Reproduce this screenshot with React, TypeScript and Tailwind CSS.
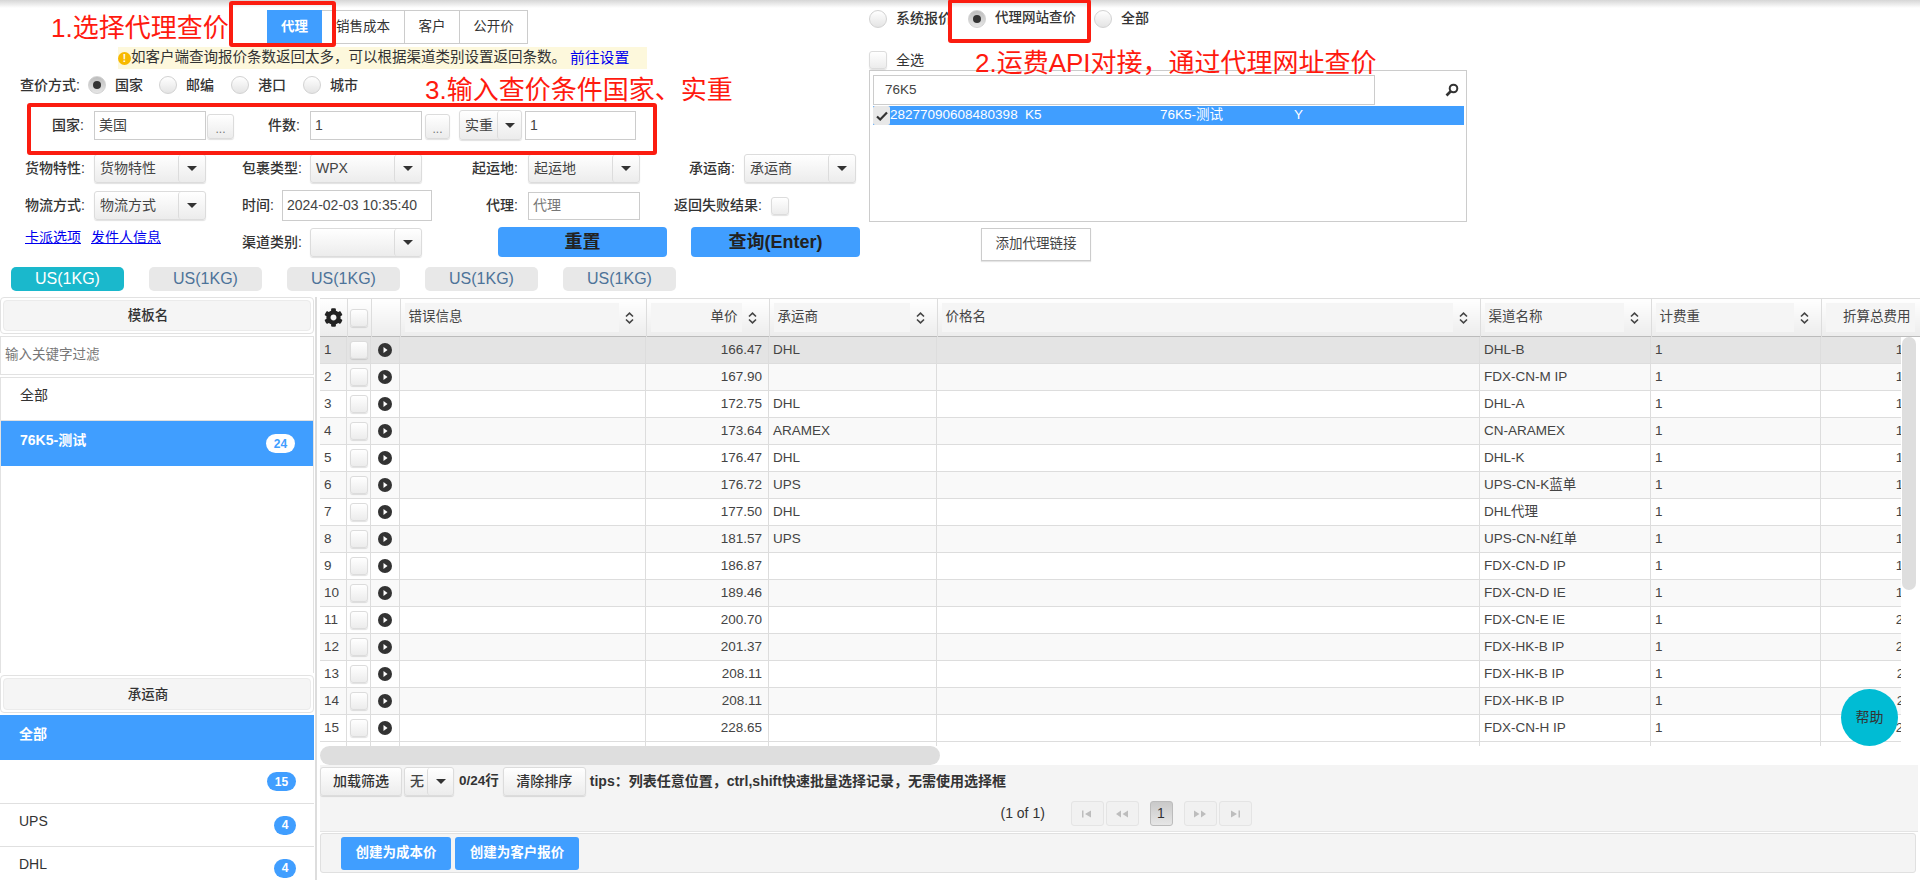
import { FaCog } from "react-icons/fa";

const ctl = "bg-gradient-to-b from-white to-[#ececec] border border-[#dcdcdc] rounded-[3px] shadow-[0_1px_1px_rgba(0,0,0,0.12)]";
const cell = "p-0 border-r border-b border-[#ddd] text-[#444] ";

function Radio({ on }: { on?: boolean }) {
  return (
    <span
      className={
        "w-[18px] h-[18px] rounded-full border border-[#d2d2d2] flex items-center justify-center shrink-0 " +
        (on ? "bg-gradient-to-b from-[#bdbdbd] to-[#e6e6e6]" : "bg-gradient-to-b from-white to-[#e4e4e4]")
      }
    >
      {on && <span className="w-[8px] h-[8px] rounded-full bg-[#333]" />}
    </span>
  );
}

function Box({ className = "" }: { className?: string }) {
  return <span className={"block w-[18px] h-[18px] shrink-0 " + ctl + " " + className} />;
}

function Caret() {
  return <span className="w-0 h-0 border-x-[5px] border-x-transparent border-t-[5px] border-t-[#333]" />;
}

function Select({ text, w, h = "h-[29px]", arrow = "w-[27px]" }: { text: string; w: string; h?: string; arrow?: string }) {
  return (
    <div className={"flex items-stretch overflow-hidden " + w + " " + h + " " + ctl}>
      <span className="flex-1 pl-[5px] flex items-center text-[14px] text-[#444] whitespace-nowrap overflow-hidden">{text}</span>
      <span className={"flex items-center justify-center border-l border-[#dcdcdc] rounded-[3px] " + arrow}>
        <Caret />
      </span>
    </div>
  );
}

function Label({ text, className }: { text: string; className: string }) {
  return <span className={"text-right text-[14px] font-medium text-[#333] whitespace-nowrap shrink-0 " + className}>{text}</span>;
}

function Input({ value, w, h = "h-[29px]", gray }: { value: string; w: string; h?: string; gray?: boolean }) {
  return (
    <div className={"border border-[#ccc] bg-white pl-[4px] flex items-center text-[14px] " + w + " " + h + " " + (gray ? "text-[#777]" : "text-[#444]")}>
      {value}
    </div>
  );
}

function Dots({ w }: { w: string }) {
  return <div className={"h-[25px] mt-[3px] text-[12px] text-[#777] flex items-end justify-center pb-[3px] leading-none " + w + " " + ctl}>...</div>;
}

function Sort() {
  return (
    <svg width="9" height="12" viewBox="0 0 9 12" fill="none" stroke="#444" strokeWidth="1.6">
      <path d="M1 4.5 L4.5 1.2 L8 4.5" />
      <path d="M1 7.5 L4.5 10.8 L8 7.5" />
    </svg>
  );
}

function Play() {
  return (
    <svg width="14" height="14" viewBox="0 0 14 14" className="block">
      <circle cx="7" cy="7" r="7" fill="#333" />
      <path d="M5.5 4 L9.5 7 L5.5 10 Z" fill="#fff" />
    </svg>
  );
}

function Badge({ n, w, white }: { n: number; w: string; white?: boolean }) {
  return (
    <span className={"h-[19px] rounded-full text-[12px] font-bold flex items-center justify-center " + w + " " + (white ? "bg-white text-[#409eff]" : "bg-[#409eff] text-white")}>
      {n}
    </span>
  );
}

function PanelHead({ text, h }: { text: string; h: string }) {
  return (
    <div className={"border border-[#e2e2e2] rounded-[4px] p-[2px] bg-white " + h}>
      <div className="h-full bg-[#f5f5f5] border border-[#ebebeb] rounded-[4px] flex items-center justify-center pr-[18px] pt-[2px] text-[13.5px] font-medium text-[#333]">
        {text}
      </div>
    </div>
  );
}

function Item({ text, badge, active, h }: { text?: string; badge?: React.ReactNode; active?: boolean; h: string }) {
  return (
    <div className={"flex items-center justify-between pl-[19px] pr-[18px] " + h + " " + (active ? "bg-[#409eff] text-white font-bold" : "text-[#333] border-b border-[#e0e0e0]")}>
      <span className="text-[14px] pb-[7px]">{text}</span>
      {badge}
    </div>
  );
}

const colWidths = [27, 24, 29, 246, 123, 168, 543, 171, 170, 124];

const rows: [string, string, string][] = [
  ["166.47", "DHL", "DHL-B"],
  ["167.90", "", "FDX-CN-M IP"],
  ["172.75", "DHL", "DHL-A"],
  ["173.64", "ARAMEX", "CN-ARAMEX"],
  ["176.47", "DHL", "DHL-K"],
  ["176.72", "UPS", "UPS-CN-K蓝单"],
  ["177.50", "DHL", "DHL代理"],
  ["181.57", "UPS", "UPS-CN-N红单"],
  ["186.87", "", "FDX-CN-D IP"],
  ["189.46", "", "FDX-CN-D IE"],
  ["200.70", "", "FDX-CN-E IE"],
  ["201.37", "", "FDX-HK-B IP"],
  ["208.11", "", "FDX-HK-B IP"],
  ["208.11", "", "FDX-HK-B IP"],
  ["228.65", "", "FDX-CN-H IP"],
];

function Cols() {
  return (
    <colgroup>
      {colWidths.map((w, i) => (
        <col key={i} style={{ width: w }} />
      ))}
    </colgroup>
  );
}

function Head({ text, right, noSort }: { text: string; right?: boolean; noSort?: boolean }) {
  return (
    <th className="p-0 font-normal border-r border-[#ddd] bg-gradient-to-b from-white to-[#ececec]">
      <div className="flex items-center h-[37px] pl-[4px]">
        <div className={"h-[29px] bg-[#f5f5f5] flex items-center px-[4px] text-[#444] whitespace-nowrap " + (noSort ? "w-[89px] justify-end" : "flex-1 ") + (right ? " justify-end" : "")}>
          {text}
        </div>
        {!noSort && (
          <div className="w-[27px] flex pl-[6px]">
            <Sort />
          </div>
        )}
      </div>
    </th>
  );
}

function PagerBtn({ d }: { d: string }) {
  return (
    <div className="w-[33px] h-[25px] bg-[#f1f1f1] border border-[#e4e4e4] rounded-[3px] flex items-center justify-center">
      <svg width="14" height="8" viewBox="0 0 14 8" fill="#bdbdbd">
        <path d={d} />
      </svg>
    </div>
  );
}

export default function App() {
  return (
    <div className="relative w-full h-screen overflow-hidden bg-white text-[#333] [font-family:'Liberation_Sans','Noto_Sans_CJK_SC',sans-serif]">
      <div className="h-[8px] bg-gradient-to-b from-[#d6d6d6] to-white" />

      <div className="flex h-[287px]">
        {/* query form */}
        <div className="w-[869px] shrink-0">
          <div className="ml-[267px] mt-[2px] flex h-[34px] text-[13.5px]">
            <div className="w-[55px] bg-[#409eff] text-white font-bold flex items-center justify-center">代理</div>
            <div className="w-[83px] border-y border-r border-[#ccc] flex items-center justify-center">销售成本</div>
            <div className="w-[55px] border-y border-r border-[#ccc] flex items-center justify-center">客户</div>
            <div className="w-[68px] border-y border-r border-[#ccc] flex items-center justify-center">公开价</div>
          </div>

          <div className="ml-[118px] mt-[3px] w-[529px] h-[22px] bg-[#fdf8dc] flex items-center text-[14.5px] whitespace-nowrap">
            <span className="w-[13px] h-[13px] rounded-full bg-[#f7b900] text-white text-[10px] font-bold flex items-center justify-center shrink-0">!</span>
            <span>如客户端查询报价条数返回太多，可以根据渠道类别设置返回条数。</span>
            <a className="text-[#0000ee] text-[14.8px] ml-[4px]">前往设置</a>
          </div>

          <div className="mt-[7px] h-[18px] flex items-center text-[14px]">
            <Label text="查价方式:" className="w-[80px] mr-[8px]" />
            <Radio on />
            <span className="ml-[9px] w-[44px] font-medium">国家</span>
            <Radio />
            <span className="ml-[9px] w-[45px] font-medium">邮编</span>
            <Radio />
            <span className="ml-[9px] w-[45px] font-medium">港口</span>
            <Radio />
            <span className="ml-[9px] font-medium">城市</span>
          </div>

          <div className="mt-[16px] h-[30px] flex items-center">
            <Label text="国家:" className="w-[84px] mr-[10px]" />
            <Input value="美国" w="w-[112px]" />
            <Dots w="w-[27px] ml-[1px]" />
            <Label text="件数:" className="w-[66px] mr-[10px]" />
            <Input value="1" w="w-[112px]" />
            <Dots w="w-[25px] ml-[3px]" />
            <div className="ml-[9px]">
              <Select text="实重" w="w-[63px]" h="h-[30px]" arrow="w-[24px]" />
            </div>
            <div className="ml-[3px]">
              <Input value="1" w="w-[111px]" />
            </div>
          </div>

          <div className="mt-[14px] grid grid-cols-[216px_216px_216px_216px] h-[29px]">
            <div className="flex items-center">
              <Label text="货物特性:" className="w-[85px] mr-[9px]" />
              <Select text="货物特性" w="w-[112px]" />
            </div>
            <div className="flex items-center">
              <Label text="包裹类型:" className="w-[86px] mr-[8px]" />
              <Select text="WPX" w="w-[112px]" />
            </div>
            <div className="flex items-center">
              <Label text="起运地:" className="w-[86px] mr-[10px]" />
              <Select text="起运地" w="w-[112px]" />
            </div>
            <div className="flex items-center">
              <Label text="承运商:" className="w-[87px] mr-[9px]" />
              <Select text="承运商" w="w-[112px]" />
            </div>
          </div>

          <div className="mt-[7px] grid grid-cols-[216px_216px_216px_216px] h-[31px]">
            <div className="flex items-center">
              <Label text="物流方式:" className="w-[85px] mr-[9px]" />
              <Select text="物流方式" w="w-[112px]" />
            </div>
            <div className="flex items-center">
              <Label text="时间:" className="w-[58px] mr-[8px]" />
              <Input value="2024-02-03 10:35:40" w="w-[151px]" h="h-[31px]" />
            </div>
            <div className="flex items-center">
              <Label text="代理:" className="w-[86px] mr-[10px]" />
              <Input value="代理" w="w-[112px]" h="h-[28px]" gray />
            </div>
            <div className="flex items-center">
              <Label text="返回失败结果:" className="w-[114px] mr-[9px]" />
              <Box />
            </div>
          </div>

          <div className="mt-[6px] grid grid-cols-[216px_216px_216px_216px] h-[30px]">
            <div className="pl-[25px] flex gap-[10px] text-[14px] text-[#0000ee] underline">
              <a>卡派选项</a>
              <a>发件人信息</a>
            </div>
            <div className="flex items-center">
              <Label text="渠道类别:" className="w-[86px] mr-[8px]" />
              <Select text="" w="w-[112px]" />
            </div>
            <div className="pl-[66px]">
              <div className="w-[169px] h-[30px] bg-[#409eff] rounded-[4px] flex items-center justify-center text-[18px] font-bold text-[#222]">重置</div>
            </div>
            <div className="pl-[43px]">
              <div className="w-[169px] h-[30px] bg-[#409eff] rounded-[4px] flex items-center justify-center text-[18px] font-bold text-[#222]">查询(Enter)</div>
            </div>
          </div>

          <div className="mt-[10px] ml-[11px] flex gap-[25px] text-[16px]">
            <div className="w-[113px] h-[24px] rounded-[5px] bg-[#1ab8cc] text-white flex items-center justify-center">US(1KG)</div>
            {[0, 1, 2, 3].map((i) => (
              <div key={i} className="w-[113px] h-[24px] rounded-[5px] bg-[#e8e8e8] text-[#4d7399] flex items-center justify-center">US(1KG)</div>
            ))}
          </div>
        </div>

        {/* agent list */}
        <div className="w-[598px] shrink-0 text-[14px]">
          <div className="mt-[1px] h-[19px] flex items-center font-medium">
            <div className="w-[99px] flex items-center gap-[9px]">
              <Radio />
              <span>系统报价</span>
            </div>
            <div className="w-[126px] flex items-center gap-[9px]">
              <Radio on />
              <span className="text-[13.5px] whitespace-nowrap">代理网站查价</span>
            </div>
            <div className="flex items-center gap-[9px]">
              <Radio />
              <span>全部</span>
            </div>
          </div>
          <div className="mt-[23px] h-[18px] flex items-center gap-[9px]">
            <Box />
            <span>全选</span>
          </div>
          <div className="mt-[1px] h-[152px] border border-[#ccc] pt-[4px] pl-[3px]">
            <div className="flex items-center h-[30px]">
              <div className="w-[502px] h-[30px] border border-[#ccc] pl-[11px] flex items-center text-[#444] text-[13.5px]">76K5</div>
              <svg width="14" height="14" viewBox="0 0 14 14" fill="none" stroke="#333" strokeWidth="2" className="ml-[70px]">
                <circle cx="8.5" cy="5.5" r="3.8" />
                <path d="M5.5 8.5 L1.5 12.5" strokeWidth="2.6" />
              </svg>
            </div>
            <div className="mt-[1px] w-[591px] h-[19px] bg-[#409eff] text-white text-[13.5px] flex items-center whitespace-nowrap">
              <span className="w-[17px] h-[19px] bg-[#e8e8e8] rounded-[2px] flex items-center justify-center shrink-0">
                <svg width="12" height="10" viewBox="0 0 12 10" fill="none" stroke="#333" strokeWidth="2.2">
                  <path d="M1 5.5 L4.2 8.5 L11 1.5" />
                </svg>
              </span>
              <span className="w-[135px]">28277090608480398</span>
              <span className="w-[135px]">K5</span>
              <span className="w-[134px]">76K5-测试</span>
              <span>Y</span>
            </div>
          </div>
          <div className="mt-[6px] ml-[112px] w-[110px] h-[33px] border border-[#ccc] shadow-[0_1px_1px_rgba(0,0,0,0.1)] flex items-center justify-center text-[13.5px] text-[#444]">
            添加代理链接
          </div>
        </div>
      </div>

      {/* result area */}
      <div className="flex h-[585px]">
        <div className="w-[314px] shrink-0 pt-[2px] flex flex-col gap-[2px]">
          <PanelHead text="模板名" h="h-[37px]" />
          <div className="h-[39px] border border-[#e2e2e2] pl-[4px] flex items-center text-[13.5px] text-[#777]">输入关键字过滤</div>
          <div className="h-[296px] border-x border-t border-[#e2e2e2]">
            <Item text="全部" h="h-[43px]" />
            <Item text="76K5-测试" active h="h-[45px]" badge={<Badge n={24} w="w-[29px]" white />} />
          </div>
          <PanelHead text="承运商" h="h-[38px]" />
          <div className="flex-1 overflow-hidden">
            <Item text="全部" active h="h-[45px]" />
            <Item h="h-[44px]" badge={<Badge n={15} w="w-[29px]" />} />
            <Item text="UPS" h="h-[43px]" badge={<Badge n={4} w="w-[22px]" />} />
            <Item text="DHL" h="h-[43px]" badge={<Badge n={4} w="w-[22px]" />} />
          </div>
        </div>
        <div className="w-[2px] bg-[#ddd] ml-[1px] mt-[2px] shrink-0" />
        <div className="ml-[3px] flex-1 min-w-0 pt-[3px] text-[13.5px]">
          <div className="w-[1600px] overflow-hidden border-t border-[#ddd]">
            <table className="table-fixed w-[1625px] border-b border-[#bbb]">
              <Cols />
              <thead>
                <tr>
                  <th className="p-0 border-r border-[#ddd] bg-gradient-to-b from-white to-[#ececec]">
                    <div className="flex justify-center">
                      <FaCog size={19} color="#222" />
                    </div>
                  </th>
                  <th className="p-0 border-r border-[#ddd] bg-gradient-to-b from-white to-[#ececec]">
                    <div className="flex justify-center">
                      <Box />
                    </div>
                  </th>
                  <th className="p-0 border-r border-[#ddd] bg-gradient-to-b from-white to-[#ececec]" />
                  <Head text="错误信息" />
                  <Head text="单价" right />
                  <Head text="承运商" />
                  <Head text="价格名" />
                  <Head text="渠道名称" />
                  <Head text="计费重" />
                  <Head text="折算总费用" noSort />
                </tr>
              </thead>
            </table>
          </div>

          <div className="flex">
            <div className="w-[1581px] h-[409px] overflow-hidden shrink-0">
              <table className="table-fixed w-[1625px] border-separate border-spacing-0">
                <Cols />
                <tbody>
                  {rows.map((r, i) => (
                    <tr key={i} className={"h-[27px] " + (i === 0 ? "bg-[#e4e4e4]" : i % 2 ? "bg-[#f9f9f9]" : "bg-white")}>
                      <td className={cell + "pl-[4px]"}>{i + 1}</td>
                      <td className={cell}>
                        <div className="flex justify-center">
                          <Box />
                        </div>
                      </td>
                      <td className={cell}>
                        <div className="flex justify-center">
                          <Play />
                        </div>
                      </td>
                      <td className={cell} />
                      <td className={cell + "pr-[6px] text-right"}>{r[0]}</td>
                      <td className={cell + "pl-[4px]"}>{r[1]}</td>
                      <td className={cell} />
                      <td className={cell + "pl-[4px]"}>{r[2]}</td>
                      <td className={cell + "pl-[4px]"}>1</td>
                      <td className={cell + "pr-[7px] text-right"}>{r[0]}</td>
                    </tr>
                  ))}
                  <tr className="h-[27px]">
                    {colWidths.map((_, i) => (
                      <td key={i} className="p-0 border-r border-[#ddd]" />
                    ))}
                  </tr>
                </tbody>
              </table>
            </div>
            <div className="ml-[1px] w-[14px] h-[253px] rounded-full bg-[#dedede]" />
          </div>

          <div className="h-[19px]">
            <div className="w-[620px] h-[19px] rounded-[10px] bg-[#dedede]" />
          </div>

          <div className="w-[1598px] h-[67px] bg-[#f4f4f4] border-b border-[#e4e4e4] pt-[2px]">
            <div className="flex items-center h-[29px] font-medium text-[14px]">
              <div className={"w-[82px] h-[29px] flex items-center justify-center " + ctl}>加载筛选</div>
              <div className="ml-[2px]">
                <Select text="无" w="w-[50px]" arrow="w-[26px]" />
              </div>
              <span className="ml-[5px] font-bold text-[13.5px]">0/24行</span>
              <div className={"ml-[4px] w-[83px] h-[29px] flex items-center justify-center " + ctl}>清除排序</div>
              <span className="ml-[4px] font-bold text-[14px]">tips：列表任意位置，ctrl,shift快速批量选择记录，无需使用选择框</span>
            </div>
            <div className="mt-[5px] pl-[14px] flex items-center justify-center h-[25px]">
              <span className="w-[70px] font-medium text-[14px]">(1 of 1)</span>
              <PagerBtn d="M2 0.5 V7.5 H3.5 V0.5 Z M11 0.5 L5 4 L11 7.5 Z" />
              <div className="ml-[2px]">
                <PagerBtn d="M6 0.5 L1 4 L6 7.5 Z M13 0.5 L7.5 4 L13 7.5 Z" />
              </div>
              <div className="mx-[11px] w-[23px] h-[25px] rounded-[3px] bg-gradient-to-b from-[#c9c9c9] to-[#e6e6e6] border border-[#bcbcbc] flex items-center justify-center font-medium text-[14px]">1</div>
              <PagerBtn d="M1 0.5 L6.5 4 L1 7.5 Z M8 0.5 L13 4 L8 7.5 Z" />
              <div className="ml-[2px]">
                <PagerBtn d="M3 0.5 L9 4 L3 7.5 Z M10.5 0.5 V7.5 H12 V0.5 Z" />
              </div>
            </div>
          </div>

          <div className="mt-[1px] w-[1596px] h-[40px] bg-[#f4f4f4] border border-[#e0e0e0] rounded-[3px] pl-[20px] pt-[3px] flex gap-[4px] text-white font-bold text-[13.5px]">
            <div className="w-[110px] h-[33px] bg-[#409eff] rounded-[3px] flex items-center justify-center">创建为成本价</div>
            <div className="w-[124px] h-[33px] bg-[#409eff] rounded-[3px] flex items-center justify-center">创建为客户报价</div>
          </div>
        </div>
      </div>

      {/* help bubble */}
      <div className="absolute left-[1841px] top-[689px] w-[57px] h-[57px] rounded-full bg-[#00bcd4] flex items-center justify-center text-[14px] text-[#333]">帮助</div>

      {/* annotations on the screenshot */}
      <span className="absolute left-[51px] top-[9px] text-[26px] text-[#ff1a0f] whitespace-nowrap">1.选择代理查价</span>
      <span className="absolute left-[975px] top-[44px] text-[26px] text-[#ff1a0f] whitespace-nowrap">2.运费API对接，通过代理网址查价</span>
      <span className="absolute left-[425px] top-[71px] text-[26px] text-[#ff1a0f] whitespace-nowrap">3.输入查价条件国家、实重</span>
      <div className="absolute left-[229px] top-[1px] w-[107px] h-[46px] border-[4px] border-[#fb1c10] rounded-[3px]" />
      <div className="absolute left-[948px] top-[-1px] w-[143px] h-[44px] border-[4px] border-[#fb1c10] rounded-[3px]" />
      <div className="absolute left-[27px] top-[103px] w-[630px] h-[52px] border-[4px] border-[#fb1c10] rounded-[3px]" />
    </div>
  );
}
